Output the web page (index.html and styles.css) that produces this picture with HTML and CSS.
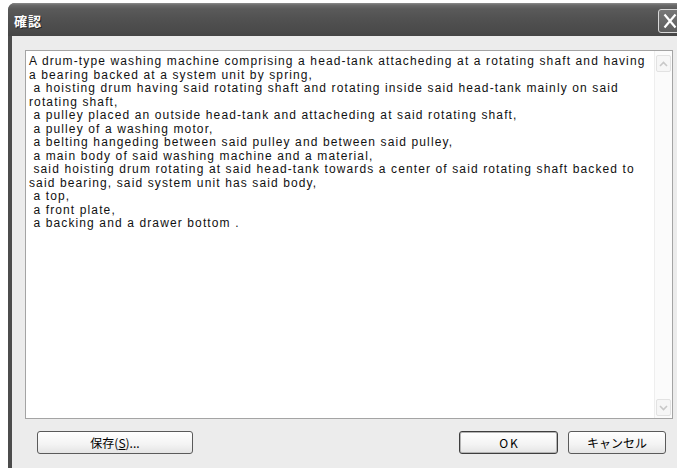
FILE: index.html
```html
<!DOCTYPE html>
<html lang="ja">
<head>
<meta charset="utf-8">
<title>確認</title>
<link rel="stylesheet" href="styles.css">
</head>
<body>
<div class="window">
  <div class="titlebar">
    <span class="title">確認</span>
    <span class="close">
      <svg width="22" height="22" viewBox="0 0 22 22">
        <path d="M5.5 4.5 L16.5 17.5 M16.5 4.5 L5.5 17.5" stroke="#fff" stroke-width="2.2" fill="none"/>
      </svg>
    </span>
  </div>
  <div class="client">
    <div class="textbox">
      <div class="text">
        <div class="line">A drum-type washing machine comprising a head-tank attacheding at a rotating shaft and having</div>
        <div class="line">a bearing backed at a system unit by spring,</div>
        <div class="line"> a hoisting drum having said rotating shaft and rotating inside said head-tank mainly on said</div>
        <div class="line">rotating shaft,</div>
        <div class="line"> a pulley placed an outside head-tank and attacheding at said rotating shaft,</div>
        <div class="line"> a pulley of a washing motor,</div>
        <div class="line"> a belting hangeding between said pulley and between said pulley,</div>
        <div class="line"> a main body of said washing machine and a material,</div>
        <div class="line"> said hoisting drum rotating at said head-tank towards a center of said rotating shaft backed to</div>
        <div class="line">said bearing, said system unit has said body,</div>
        <div class="line"> a top,</div>
        <div class="line"> a front plate,</div>
        <div class="line"> a backing and a drawer bottom .</div>
      </div>
      <div class="scrollbar">
        <div class="sb-btn">
          <svg width="9" height="6" viewBox="0 0 9 6"><path d="M1 5 L4.5 1.5 L8 5" stroke="#c8c8c8" stroke-width="1.6" fill="none"/></svg>
        </div>
        <div class="sb-track"></div>
        <div class="sb-btn">
          <svg width="9" height="6" viewBox="0 0 9 6"><path d="M1 1 L4.5 4.5 L8 1" stroke="#c8c8c8" stroke-width="1.6" fill="none"/></svg>
        </div>
      </div>
    </div>
    <div class="buttons">
      <button class="btn btn-save">保存(<u>S</u>)...</button>
      <div class="btn-group">
        <button class="btn btn-ok">OK</button>
        <button class="btn btn-cancel">キャンセル</button>
      </div>
    </div>
  </div>
</div>
</body>
</html>
```
FILE: styles.css
```css
html, body {
  margin: 0;
  padding: 0;
  background: #ffffff;
  overflow: hidden;
}

body {
  width: 677px;
  height: 468px;
  padding: 3px 0 0 8px;
  box-sizing: border-box;
}

.window {
  width: 690px;
  height: 480px;
  background: #4c4c4c;
  border-radius: 7px 7px 0 0;
  display: flex;
  flex-direction: column;
}

.titlebar {
  height: 33px;
  flex: none;
  display: flex;
  align-items: center;
  justify-content: space-between;
  padding: 0 0 0 6px;
  border-radius: 7px 7px 0 0;
  background: linear-gradient(#8c8c8c 0px, #6a6a6a 2px, #5a5a5a 6px, #515151 16px, #4a4a4a 28px, #454545 33px);
}

.title {
  color: #ffffff;
  font-family: "Noto Sans CJK JP", sans-serif;
  font-weight: bold;
  font-size: 13px;
  letter-spacing: 1px;
  text-shadow: 1px 1px 0 #222;
  margin-top: 2px;
}

.close {
  width: 22px;
  height: 22px;
  margin-right: 16px;
  margin-top: 2px;
  border: 1px solid #d8d8d8;
  border-radius: 3px;
  background: linear-gradient(#777, #5d5d5d);
  display: flex;
  align-items: center;
  justify-content: center;
}

.client {
  flex: 1;
  margin-left: 4px;
  background: #ececec;
  padding: 14px 0 0 13px;
}

.textbox {
  width: 648px;
  height: 369px;
  box-sizing: border-box;
  border: 1px solid #a4a4a4;
  background: #ffffff;
  display: flex;
}

.text {
  flex: 1;
  padding: 4px 0 0 3px;
  font-family: "Liberation Sans", Arial, sans-serif;
  font-size: 12px;
  line-height: 13.5px;
  color: #111111;
  letter-spacing: 1.12px;
}

.line {
  white-space: pre;
}

.scrollbar {
  width: 17px;
  flex: none;
  display: flex;
  flex-direction: column;
  padding: 4px 0 2px 0;
  border-left: 1px solid #eeeeee;
  background: #fbfbfb;
}

.sb-btn {
  height: 15px;
  margin: 0 1px 0 1px;
  border: 1px solid #e2e2e2;
  border-radius: 2px;
  background: #f6f6f6;
  display: flex;
  align-items: center;
  justify-content: center;
}

.sb-track {
  flex: 1;
}

.buttons {
  width: 648px;
  margin-top: 12px;
  padding: 0 7px 0 12px;
  box-sizing: border-box;
  display: flex;
  justify-content: space-between;
}

.btn-group {
  display: flex;
  gap: 10px;
}

.btn {
  height: 23px;
  box-sizing: border-box;
  border: 1px solid #5a5a5a;
  border-radius: 3px;
  background: linear-gradient(#ffffff, #f3f3f3 60%, #e4e4e4);
  font-family: "Noto Sans CJK JP", sans-serif;
  font-size: 12px;
  color: #000000;
  padding: 0;
  line-height: 20px;
}

.btn-save {
  width: 156px;
}

.btn-ok {
  width: 99px;
  border-color: #3e3e3e;
  box-shadow: inset 0 0 0 1px #b4b4b4;
  letter-spacing: 2px;
  padding-left: 2px;
}

.btn-cancel {
  width: 98px;
}
```
